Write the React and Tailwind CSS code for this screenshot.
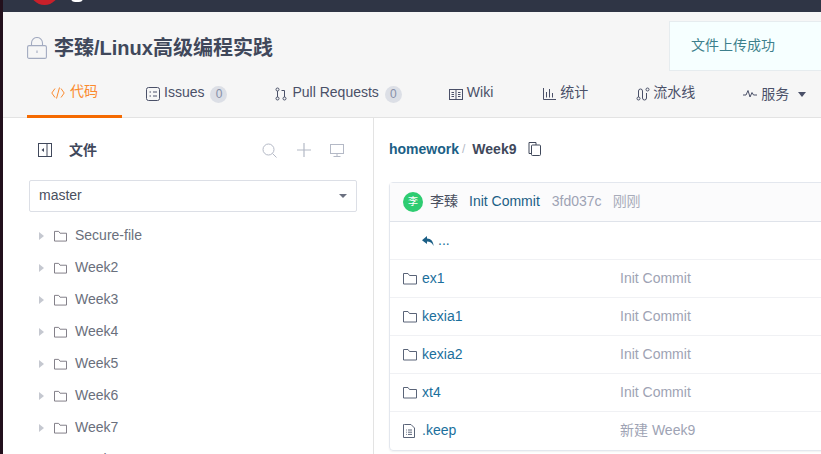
import React from 'react';

const FONT = "font-['Liberation_Sans','Noto_Sans_CJK_SC',sans-serif]";

const FolderIcon = ({ className }) => (
  <svg viewBox="0 0 14 13" className={className} fill="none" stroke="currentColor" strokeWidth="1">
    <path d="M0.5 12V1.5H5L6.5 3.5H13.5V12Z" />
  </svg>
);

const FileIcon = () => (
  <svg viewBox="0 0 12 14" className="w-3 h-3.5 text-[#5a6478]" fill="none" stroke="currentColor" strokeWidth="1">
    <path d="M1.5.5H8L11.5 4V13.5H.5V.5Z" />
    <path d="M3 6H3.8M5 6H9M3 8.2H3.8M5 8.2H9M3 10.4H3.8M5 10.4H9" />
  </svg>
);

const Badge = ({ n }) => (
  <span className="ml-[6px] w-[17px] h-[17px] rounded-full bg-[#dcdfe6] text-[#8790a8] text-[12px] leading-[17px] text-center mt-[1px]">
    {n}
  </span>
);

const Tab = ({ icon, label, children, className = '' }) => (
  <div className={`flex items-center pb-[5px] text-[#4a5068] text-[14px] ${className}`}>
    {icon}
    <span className="mb-[4px]">{label}</span>
    {children}
  </div>
);

const tree = ['Secure-file', 'Week2', 'Week3', 'Week4', 'Week5', 'Week6', 'Week7', 'Week8'];

const rows = [
  { name: 'ex1', msg: 'Init Commit' },
  { name: 'kexia1', msg: 'Init Commit' },
  { name: 'kexia2', msg: 'Init Commit' },
  { name: 'xt4', msg: 'Init Commit' },
  { name: '.keep', msg: '新建 Week9', file: true },
];

const App = () => {
  return (
    <div className={`${FONT} relative flex w-[821px] h-[454px] overflow-hidden bg-white`}>
      <div className="w-[3px] shrink-0 bg-[#22101c]" />
      <div className="flex-1 min-w-0 flex flex-col">
        <div className="h-3 shrink-0 bg-[#2f3545] relative overflow-hidden">
          <div className="absolute left-[27px] top-[-24px] w-[29px] h-[29px] rounded-full bg-[#c9202a]" />
          <div className="absolute left-[68px] top-[-6px] w-[12px] h-[8px] rounded-full bg-white" />
        </div>

        <div className="h-[106px] shrink-0 bg-[#f6f6f6] border-b border-[#e3e3e3] pl-[24px]">
          <div className="flex items-center h-[33px] mt-[19px]">
            <svg viewBox="0 0 20 22" className="w-5 h-[22px] text-[#a3abc0]" fill="none" stroke="currentColor" strokeWidth="1.1">
              <rect x=".6" y="8.6" width="18.8" height="12.8" rx="1.5" />
              <path d="M4.5 8.6V6a5.5 5.5 0 0 1 11 0v2.6M10 13.5v2.5" />
            </svg>
            <span className="ml-[7px] text-[20px] font-bold text-[#40485b]">李臻/Linux高级编程实践</span>
          </div>
          <div className="flex items-start h-[41px] mt-[12px]">
            <div className="w-[95px] h-[42px] border-b-[3px] border-[#f56a00] flex items-center pl-[24px] pb-[5px] text-[#fb8a2e] text-[14px]">
              <svg viewBox="0 0 14 12" className="w-[14px] h-3 mr-[5px]" fill="none" stroke="currentColor" strokeWidth="1">
                <path d="M4 1.5L.8 6L4 10.5M10 1.5L13.2 6L10 10.5M8.5 .5L5.5 11.5" />
              </svg>
              <span className="mb-[3px]">代码</span>
            </div>
            <Tab
              className="ml-[24px] h-[41px]"
              label="Issues"
              icon={
                <svg viewBox="0 0 14 14" className="w-[14px] h-[14px] mr-[4px]" fill="none" stroke="currentColor" strokeWidth="1">
                  <rect x=".5" y=".5" width="13" height="13" rx="2" />
                  <path d="M3.5 5H5M7 5H11M3.5 9H5M7 9H11" />
                </svg>
              }
            >
              <Badge n="0" />
            </Tab>
            <Tab
              className="ml-[48px] h-[41px]"
              label="Pull Requests"
              icon={
                <svg viewBox="0 0 12 14" className="w-3 h-[14px] mr-[5px]" fill="none" stroke="currentColor" strokeWidth="1">
                  <circle cx="2.5" cy="2.5" r="1.5" />
                  <circle cx="2.5" cy="11.5" r="1.5" />
                  <circle cx="9.5" cy="11.5" r="1.5" />
                  <path d="M2.5 4V10M9.5 10V3.5H6.5" />
                </svg>
              }
            >
              <Badge n="0" />
            </Tab>
            <Tab
              className="ml-[47px] h-[41px]"
              label="Wiki"
              icon={
                <svg viewBox="0 0 14 11" className="w-[14px] h-[11px] mr-[4px]" fill="none" stroke="currentColor" strokeWidth="1">
                  <rect x=".5" y=".5" width="13" height="10" />
                  <path d="M7 .5V10.5M2.5 3.5H5M2.5 5.5H5M2.5 7.5H5M9 3.5H11.5M9 5.5H11.5M9 7.5H11.5" />
                </svg>
              }
            />
            <Tab
              className="ml-[50px] h-[41px]"
              label="统计"
              icon={
                <svg viewBox="0 0 13 12" className="w-[13px] h-3 mr-[4px]" fill="none" stroke="currentColor" strokeWidth="1">
                  <path d="M.5 0V11.5H13M3.5 4V9.5M6.5 1V9.5M9.5 5V9.5" />
                </svg>
              }
            />
            <Tab
              className="ml-[48px] h-[41px]"
              label="流水线"
              icon={
                <svg viewBox="0 0 14 14" className="w-[14px] h-[14px] mr-[3px]" fill="none" stroke="currentColor" strokeWidth="1">
                  <circle cx="2.5" cy="11.5" r="1.5" />
                  <circle cx="11.5" cy="2.5" r="1.5" />
                  <path d="M2.5 10V4a2 2 0 0 1 4 0v7a2 2 0 0 0 4 0V6" />
                </svg>
              }
            />
            <div className="ml-[48px] h-[41px] flex items-center pb-[5px] text-[#4a5068] text-[14px]">
              <svg viewBox="0 0 14 10" className="w-[14px] h-[10px] mr-[4px]" fill="none" stroke="currentColor" strokeWidth="1">
                <path d="M0 6H3L5 1.5L7 8L9 3.5L10.5 6H14" />
              </svg>
              服务
              <span className="ml-[9px] w-0 h-0 border-x-[4px] border-x-transparent border-t-[5px] border-t-[#4a5068]" />
            </div>
          </div>
        </div>

        <div className="flex flex-1 min-h-0">
          <aside className="w-[371px] shrink-0 border-r border-[#e3e3e3] pl-[26px] pr-[16px] overflow-hidden">
            <div className="flex items-center h-[32px] mt-[16px] pl-[9px] pr-[13px]">
              <svg viewBox="0 0 14 14" className="w-[14px] h-[14px] text-[#40485b]" fill="none" stroke="currentColor" strokeWidth="1">
                <rect x=".5" y=".5" width="13" height="13" />
                <path d="M9 .5V13.5" />
                <path d="M6 5L3.5 7L6 9Z" fill="currentColor" stroke="none" />
              </svg>
              <span className="ml-[17px] text-[14px] font-bold text-[#40485b]">文件</span>
              <div className="ml-auto flex items-center text-[#b4b9c6]">
                <svg viewBox="0 0 15 15" className="w-[15px] h-[15px]" fill="none" stroke="currentColor" strokeWidth="1">
                  <circle cx="6.5" cy="6.5" r="5.5" />
                  <path d="M10.5 10.5L14.5 14.5" />
                </svg>
                <svg viewBox="0 0 14 14" className="w-[14px] h-[14px] ml-[20px]" fill="none" stroke="currentColor" strokeWidth="1.2">
                  <path d="M7 0V14M0 7H14" />
                </svg>
                <svg viewBox="0 0 14 13" className="w-[14px] h-[13px] ml-[19px]" fill="none" stroke="currentColor" strokeWidth="1">
                  <rect x=".5" y=".5" width="13" height="9" />
                  <path d="M7 9.5V12.5M3.5 12.5H10.5" />
                </svg>
              </div>
            </div>
            <div className="mt-[14px] h-8 w-[328px] border border-[#dcdfe6] rounded-[2px] flex items-center pl-[9px] pr-[9px] pb-[1px] text-[14px] text-[#4a5060]">
              master
              <span className="ml-auto mt-[1px] w-0 h-0 border-x-[4px] border-x-transparent border-t-[4px] border-t-[#6b7080]" />
            </div>
            <ul className="mt-[7px]">
              {tree.map((name) => (
                <li key={name} className="flex items-center h-8 pl-[10px] text-[14px] text-[#6a6f7c]">
                  <span className="w-0 h-0 border-y-[4px] border-y-transparent border-l-[5px] border-l-[#c5c8d0] mt-[2px]" />
                  <FolderIcon className="w-[13px] h-3 ml-[10px] mt-[2px] text-[#7a7680]" />
                  <span className="ml-[8px]">{name}</span>
                </li>
              ))}
            </ul>
          </aside>

          <main className="flex-1 min-w-0 pl-[15px]">
            <div className="flex items-center h-[32px] mt-[15px] text-[14px] font-bold">
              <span className="text-[#1b5f86]">homework</span>
              <span className="ml-[3px] font-normal text-[#b4b9c6] text-[12px]">/</span>
              <span className="ml-[7px] text-[#40485b]">Week9</span>
              <svg viewBox="0 0 13 14" className="w-[13px] h-[14px] ml-[12px] text-[#40485b]" fill="none" stroke="currentColor" strokeWidth="1">
                <path d="M3.5 11.5H1V.5H8V3" />
                <rect x="3.5" y="3" width="9" height="10.5" rx="1" />
              </svg>
            </div>
            <div className="mt-[17px] w-[460px] border border-[#e3e7ee] rounded-[4px] shadow-[0_1px_2px_rgba(0,0,0,0.06)]">
              <div className="h-[39px] bg-[#fbfbfc] border-b border-[#dfe3ea] flex items-center pl-[13px] text-[14px]">
                <span className="w-5 h-5 rounded-full bg-[#2ecc71] text-white text-[10px] leading-5 text-center">李</span>
                <span className="ml-[7px] mb-[2px] text-[#4a5060]">李臻</span>
                <span className="ml-[11px] mb-[2px] text-[#1b5f86]">Init Commit</span>
                <span className="ml-[12px] mb-[2px] text-[#9ea3b4]">3fd037c</span>
                <span className="ml-[11px] mb-[2px] text-[#a8acba]">刚刚</span>
              </div>
              <div className="h-[38px] border-b border-[#f0f1f4] flex items-center pl-[32px] text-[14px] text-[#1b6f9c]">
                <svg viewBox="0 0 12 10" className="w-3 h-[10px] text-[#1b5f86]" fill="currentColor">
                  <path d="M5 0L0 4.2L5 8V5.5C8 5.5 10 6.5 11.5 10C11.5 5.5 9 2.8 5 2.6Z" />
                </svg>
                <span className="ml-[4px]">...</span>
              </div>
              {rows.map((row, i) => (
                <div
                  key={row.name}
                  className={`h-[38px] flex items-center pl-[13px] text-[14px] ${i < rows.length - 1 ? 'border-b border-[#f0f1f4]' : 'pb-[1px]'}`}
                >
                  <span className="w-[14px] flex justify-start">
                    {row.file ? <FileIcon /> : <FolderIcon className="w-[14px] h-[13px] text-[#5a6478]" />}
                  </span>
                  <span className="ml-[5px] w-[198px] text-[#1b6f9c]">{row.name}</span>
                  <span className="text-[#9ea3b4]">{row.msg}</span>
                </div>
              ))}
            </div>
          </main>
        </div>
      </div>

      <div className="absolute left-[669px] top-[21px] w-[160px] h-[50px] bg-[#f6ffff] border border-[#e6ecef] flex items-center pl-[21px] pb-[1px] text-[14px] text-[#3d7f8c]">
        文件上传成功
      </div>
    </div>
  );
};

export default App;
